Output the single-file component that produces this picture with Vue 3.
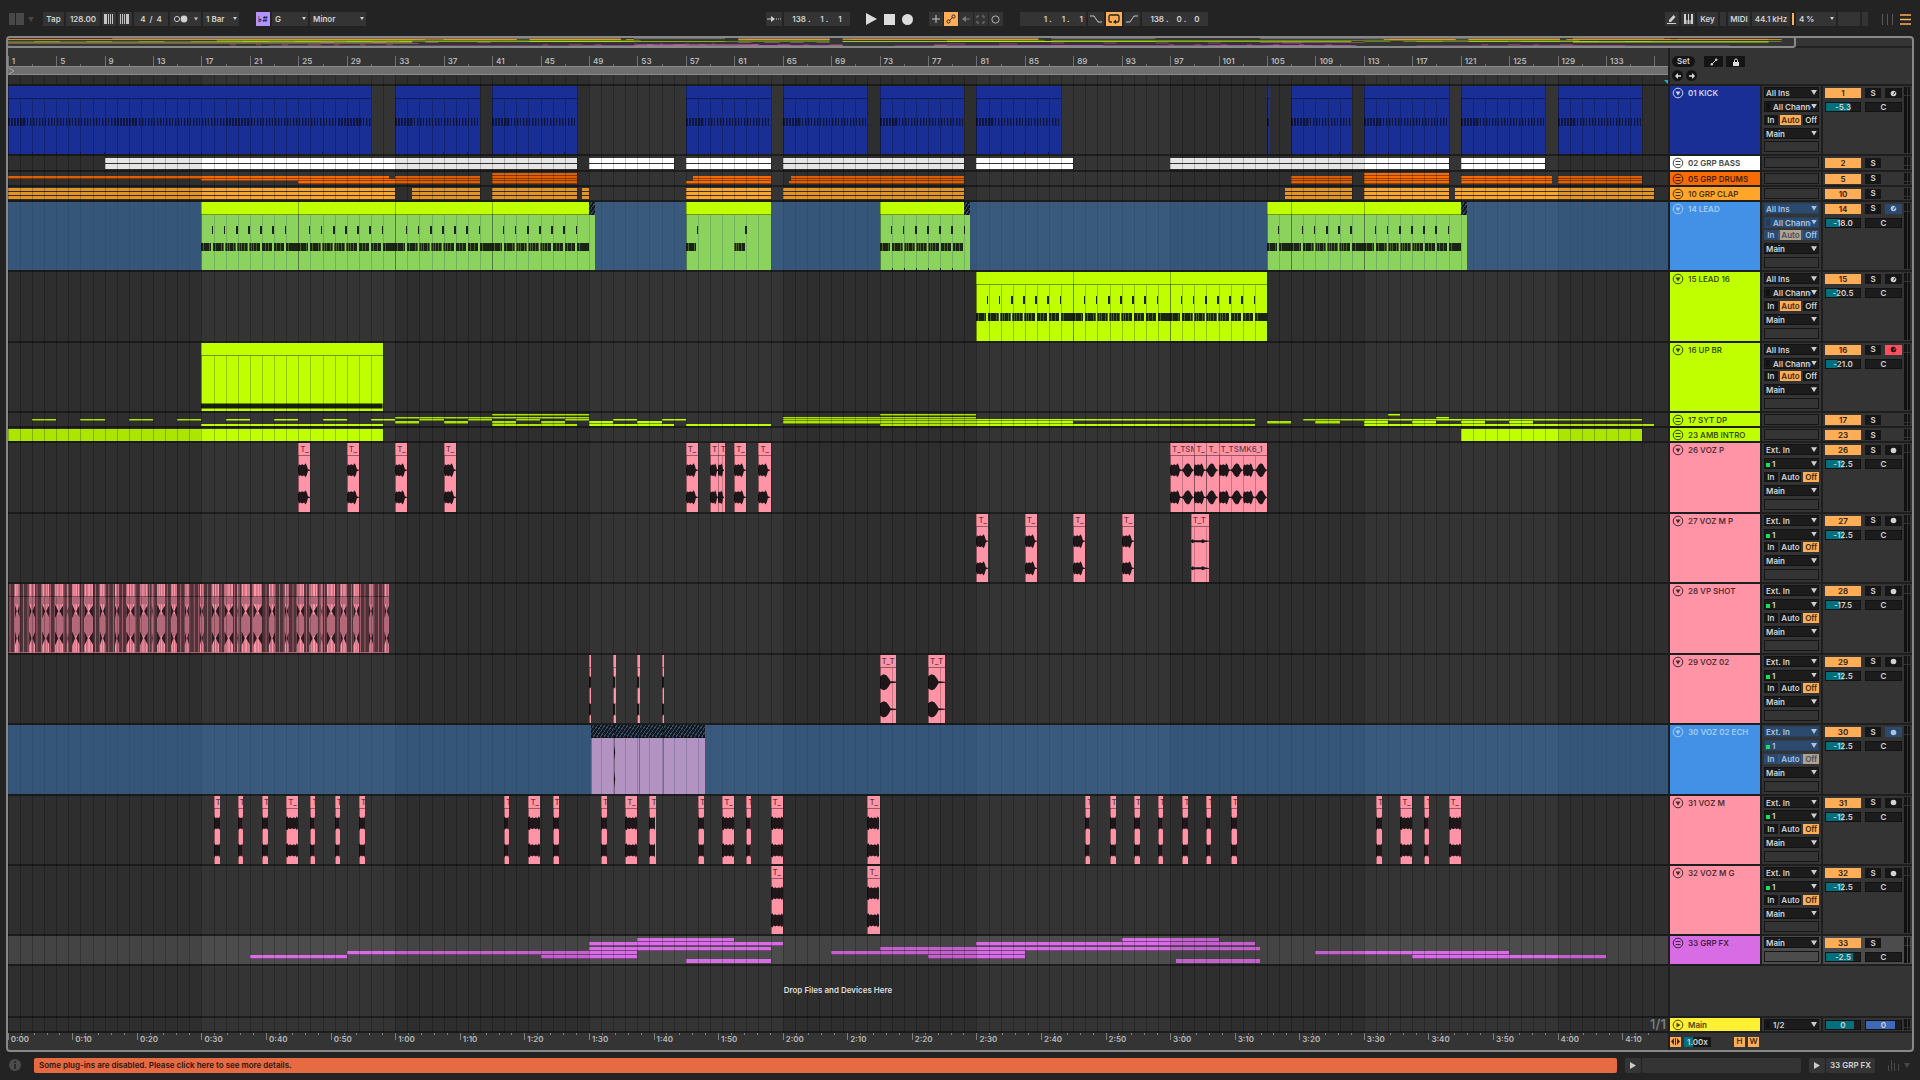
<template>
  <div class="app">
    <header class="toolbar">
      <div class="group">
        <button class="plain" aria-label="Toggle browser">
          <svg width="25" height="12" viewBox="0 0 25 12"><path d="M0 0h6v12H0zM7 0h8v12H7z" fill="#484848" /><path d="M19 4h6l-3 5z" fill="#484848" /></svg>
        </button>
        <div class="cluster gap-tap">
          <button class="tb w21">Tap</button>
          <input class="tb w34" value="128.00" aria-label="Tempo" />
          <button class="tb w14" aria-label="Nudge down">
            <svg width="10" height="10" viewBox="0 0 10 10"><path d="M0 0h3v10H0zM4 0h1v10H4zM6 0h1v10H6zM8 0h1v10H8z" fill="#c4c4c4" /></svg>
          </button>
          <button class="tb w14" aria-label="Nudge up">
            <svg width="10" height="10" viewBox="0 0 10 10"><path d="M0 0h1v10H0zM2 0h1v10H2zM4 0h1v10H4zM6 0h3v10H6z" fill="#c4c4c4" /></svg>
          </button>
          <input class="tb w34" value="4  /  4" aria-label="Time signature" />
          <button class="tb w31" aria-label="Metronome">
            <svg width="26" height="8" viewBox="0 0 26 8"><circle cx="4" cy="4" r="2.6" fill="none" stroke="#c4c4c4" /><circle cx="11" cy="4" r="3.4" fill="#d0d0d0" /><path d="M21 2.500h4l-2 3z" fill="#c4c4c4" /></svg>
          </button>
          <span class="pick tb-pick w36"><select aria-label="Quantization"><option>1 Bar</option></select></span>
        </div>
        <div class="cluster gap-key">
          <button class="tb w14 violet" aria-label="Scale mode">♭<sup>#</sup></button>
          <span class="pick tb-pick w36"><select aria-label="Root note"><option>G</option></select></span>
          <span class="pick tb-pick w56"><select aria-label="Scale"><option>Minor</option></select></span>
        </div>
      </div>
      <i class="push-a"></i>
      <div class="group">
        <div class="cluster">
          <button class="tb w16" aria-label="Follow">
            <svg width="14" height="8" viewBox="0 0 14 8"><path d="M0 4h4M9 4h1M11 4h1M13 4h1" stroke="#c4c4c4" /><path d="M4 1l4 3-4 3z" fill="#d0d0d0" /></svg>
          </button>
          <input class="tb w66" value="138 .     1 .     1" aria-label="Arrangement position" />
        </div>
        <div class="transport">
          <button class="plain" aria-label="Play"><svg width="11" height="12" viewBox="0 0 11 12"><path d="M0 0l11 6-11 6z" fill="#dcdcdc" /></svg></button>
          <button class="plain" aria-label="Stop"><svg width="11" height="11" viewBox="0 0 11 11"><path d="M0 0h11v11H0z" fill="#dcdcdc" /></svg></button>
          <button class="plain" aria-label="Record"><svg width="11" height="11" viewBox="0 0 11 11"><circle cx="5.500" cy="5.500" r="5.500" fill="#dcdcdc" /></svg></button>
        </div>
        <div class="cluster tight">
          <button class="tb w14" aria-label="Overdub"><svg width="8" height="8" viewBox="0 0 8 8"><path d="M4 0v8M0 4h8" stroke="#c4c4c4" /></svg></button>
          <button class="tb w14 on" aria-label="Automation arm">
            <svg width="10" height="10" viewBox="0 0 10 10"><circle cx="2.500" cy="7.500" r="1.600" fill="none" stroke="#2a2a2a" /><circle cx="7.500" cy="2.500" r="1.600" fill="none" stroke="#2a2a2a" /><path d="M3.500 6.500l3-3" stroke="#2a2a2a" /></svg>
          </button>
          <button class="tb w14" aria-label="Re-enable automation"><svg width="8" height="8" viewBox="0 0 8 8"><path d="M8 4H3" stroke="#7c7c7c" /><path d="M4 1v6L0 4z" fill="#7c7c7c" /></svg></button>
          <button class="tb w14" aria-label="Capture MIDI"><svg width="9" height="9" viewBox="0 0 9 9"><path d="M1 3V1h2M6 1h2v2M8 6v2H6M3 8H1V6" fill="none" stroke="#7c7c7c" /></svg></button>
          <button class="tb w14" aria-label="Session record"><svg width="9" height="9" viewBox="0 0 9 9"><circle cx="4.500" cy="4.500" r="3.600" fill="none" stroke="#b0b0b0" /></svg></button>
        </div>
        <div class="cluster gap-loop">
          <input class="tb w66 right" value="1 .     1 .     1" aria-label="Loop start" />
          <button class="tb w16" aria-label="Punch in"><svg width="12" height="8" viewBox="0 0 12 8"><path d="M0 1h4l4 6h4" fill="none" stroke="#c4c4c4" /></svg></button>
          <button class="tb w16 on" aria-label="Loop">
            <svg width="12" height="10" viewBox="0 0 12 10"><path d="M4 8H2.500Q1 8 1 6.500v-4Q1 1 2.500 1h7Q11 1 11 2.500v4Q11 8 9.500 8H8" fill="none" stroke="#222" stroke-width="1.300" /><path d="M8 5.500v4.500L5 8z" fill="#222" /></svg>
          </button>
          <button class="tb w16" aria-label="Punch out"><svg width="12" height="8" viewBox="0 0 12 8"><path d="M0 7h4l4-6h4" fill="none" stroke="#c4c4c4" /></svg></button>
          <input class="tb w66" value="138 .    0 .    0" aria-label="Loop length" />
        </div>
      </div>
      <i class="push-b"></i>
      <div class="group">
        <div class="cluster">
          <button class="tb w14" aria-label="Draw mode"><svg width="10" height="10" viewBox="0 0 10 10"><path d="M2 6l4.500-5 2 2L4 8H2z" fill="#d0d0d0" /><path d="M0 9.500h9" stroke="#d0d0d0" /></svg></button>
          <button class="tb w14" aria-label="Computer keyboard"><svg width="9" height="10" viewBox="0 0 9 10"><path d="M0 0h9v10H0z" fill="#d0d0d0" /><path d="M3 6v4M6 6v4" stroke="#343434" /><path d="M2 0h2v6H2zM5 0h2v6H5z" fill="#343434" /></svg></button>
          <button class="tb w21">Key</button>
          <span class="tb w6"></span>
          <button class="tb w22">MIDI</button>
          <button class="tb w38">44.1 kHz</button>
          <span class="cpu"></span>
          <span class="pick tb-pick w40"><select aria-label="CPU load"><option>4 %</option></select></span>
          <span class="tb w22"></span>
          <span class="tb w6"></span>
        </div>
        <div class="views">
          <button class="plain" aria-label="Session view"><svg width="11" height="11" viewBox="0 0 11 11"><path d="M.5 0v11M5.500 0v11M10.500 0v11" stroke="#585858" /></svg></button>
          <button class="plain" aria-label="Arrangement view"><svg width="11" height="11" viewBox="0 0 11 11"><path d="M0 1h11M0 5.500h11M0 10h11" stroke="#ffad56" stroke-width="1.600" /></svg></button>
        </div>
      </div>
    </header>

    <main class="window">
      <div class="overview">
        <svg :viewBox="`0 0 146 ${tracks.length}`" preserveAspectRatio="none">
          <rect v-for="(m, i) in minimap" :key="i" :x="m.x" :y="m.y" :width="m.w" height="1.3" :fill="m.fill" opacity="0.6" />
        </svg>
        <i class="visible-range"></i>
      </div>

      <div class="columns">
        <section class="timeline">
          <div class="ruler">
            <i v-for="b in halfTicks" :key="'t' + b" class="tick" :style="{ left: pos(b) }"></i>
            <span v-for="b in barLabels" :key="b" class="bar-label" :style="{ left: pos(b) }">{{ b <= 133 ? b : '' }}</span>
          </div>
          <div class="scrub">
            <svg width="8" height="8" viewBox="0 0 8 8"><path d="M1 1l5 3-5 3" fill="none" stroke="#a8a8a8" /></svg>
          </div>
          <div class="canvas">
            <i v-for="b in shades" :key="'s' + b" class="shade" :style="{ left: pos(b), width: len(Math.min(16, 138.1 - b)) }"></i>
            <i v-for="b in 137" :key="'g' + b" class="line" :style="{ left: pos(b) }"></i>
            <div class="lane locators"><i class="end-marker"></i></div>
            <div v-for="t in tracks" :key="t.num" :class="['lane', t.size, { picked: t.picked, focus: t.focus }]">
              <template v-for="(s, si) in t.stripes || []" :key="si">
                <i
                  v-for="(seg, i) in s.segs"
                  :key="i"
                  :class="['stripe', { joined: s.joined }]"
                  :style="{ left: pos(seg[0]), width: len(seg[1] - seg[0]), top: s.top + '%', height: s.h + '%', background: t.color }"
                ></i>
              </template>
              <div
                v-for="(c, ci) in t.clips || []"
                :key="ci"
                class="clip"
                :style="{ left: pos(c.a), width: len(c.b - c.a) }"
              >
                <i class="clip-body" :style="{ background: t.clipColor || t.color }"></i>
                <svg v-if="c.art" :viewBox="`0 0 ${c.art.w} 68`" preserveAspectRatio="none" :shape-rendering="c.art.crisp ? 'crispEdges' : 'auto'">
                  <path v-if="c.art.base" :d="c.art.base" fill="#4e3339" />
                  <path v-if="c.art.pink" :d="c.art.pink" :fill="PINK" />
                  <path v-if="c.art.soft" :d="c.art.soft" :fill="c.art.softFill" />
                  <path :d="c.art.d" :fill="c.art.fill" />
                </svg>
                <div
                  :class="['clip-head', { hatch: c.hatch }]"
                  :style="{ width: headWidth(c), background: c.hatch || c.bare ? null : t.clipColor || t.color }"
                >{{ c.name }}</div>
                <i v-if="c.tail" class="clip-tail hatch" :style="{ left: headWidth(c) }"></i>
              </div>
            </div>
            <div class="lane drop"><span>Drop Files and Devices Here</span></div>
            <div class="lane low main-lane"><span>1/1</span></div>
          </div>
          <div class="time-ruler">
            <i v-for="s in 128" :key="s" class="dot" :style="{ left: sec((s - 1) * 2) }"></i>
            <span v-for="s in 26" :key="'l' + s" class="time-label" :style="{ left: sec((s - 1) * 10) }">{{ clock((s - 1) * 10) }}</span>
          </div>
        </section>

        <aside class="side">
          <div class="side-top">
            <div class="side-line">
              <button class="pill">Set</button>
              <button class="mini w19" aria-label="Lock envelopes"><svg width="8" height="8" viewBox="0 0 8 8"><path d="M2 6l4-4" stroke="#ccc" /><circle cx="1.800" cy="6.200" r="1.200" fill="#ccc" /><circle cx="6.200" cy="1.800" r="1.200" fill="#ccc" /></svg></button>
              <button class="mini w19" aria-label="Automation mode"><svg width="8" height="8" viewBox="0 0 8 8"><path d="M1 4h6v4H1z" fill="#ddd" /><path d="M2.500 4V2.500a1.500 1.500 0 0 1 3 0V4" fill="none" stroke="#ddd" /></svg></button>
            </div>
            <div class="side-line arrows">
              <button class="round" aria-label="Previous locator"><svg width="6" height="6" viewBox="0 0 6 6"><path d="M6 3H2" stroke="#ddd" stroke-width="1.400" /><path d="M3 0v6L0 3z" fill="#ddd" /></svg></button>
              <button class="round" aria-label="Next locator"><svg width="6" height="6" viewBox="0 0 6 6"><path d="M0 3h4" stroke="#ddd" stroke-width="1.400" /><path d="M3 0v6l3-3z" fill="#ddd" /></svg></button>
            </div>
          </div>

          <div v-for="t in tracks" :key="t.num" :class="['strip', t.size, { picked: t.picked, focus: t.focus }]">
            <div class="head" :style="{ background: t.color, color: t.ink }">
              <button class="fold" :aria-label="`Fold ${t.name}`">
                <svg width="12" height="12" viewBox="0 0 12 12"><circle cx="6" cy="6" r="4.800" fill="none" stroke="currentColor" /><path v-if="t.stripes" d="M3.500 4.500h5M3.500 7.500h5" stroke="currentColor" /><path v-else d="M3.500 4.500h5L6 8.500z" fill="currentColor" /></svg>
              </button>
              <span>{{ t.name }}</span>
            </div>
            <div class="io">
              <template v-if="t.input">
                <span class="pick tint"><select :aria-label="`${t.name} input`"><option>{{ t.input }}</option></select></span>
                <span :class="['pick', 'tint', t.input === 'Ext. In' ? 'lit' : 'unlit']"><select :aria-label="`${t.name} channel`"><option>{{ t.channel }}</option></select></span>
                <div class="monitor tint">
                  <button v-for="m in ['In', 'Auto', 'Off']" :key="m" :class="[m.toLowerCase(), { on: m === t.monitor }]">{{ m }}</button>
                </div>
              </template>
              <span v-if="t.volume" class="pick"><select :aria-label="`${t.name} output`"><option>Main</option></select></span>
              <div class="blank"></div>
            </div>
            <div class="mix">
              <button class="num">{{ t.num }}</button>
              <button class="key solo">S</button>
              <button v-if="t.input" :class="['key', 'arm', 'tint', { armed: t.armed }]" :aria-label="`Arm ${t.name}`">
                <svg width="7" height="7" viewBox="0 0 7 7"><circle cx="3.500" cy="3.500" r="2.800" fill="currentColor" /><path v-if="t.channel !== '1'" d="M3.500 4.500l2-3" :stroke="t.armed ? '#ff4f5f' : '#161616'" /></svg>
              </button>
              <template v-if="t.volume">
                <input class="vol" :value="t.volume" :aria-label="`${t.name} volume`" :style="{ '--fill': t.fill + '%' }" />
                <input class="pan" value="C" :aria-label="`${t.name} pan`" />
              </template>
            </div>
            <div class="meter"><i></i><i></i></div>
          </div>

          <div class="strip drop"></div>
          <div class="strip low">
            <div class="head main-head">
              <button class="fold" aria-label="Main track">
                <svg width="12" height="12" viewBox="0 0 12 12"><circle cx="6" cy="6" r="4.800" fill="none" stroke="currentColor" /><path d="M4.500 3.500v5L8.500 6z" fill="currentColor" /></svg>
              </button>
              <span>Main</span>
            </div>
            <div class="io"><span class="pick unlit"><select aria-label="Main output"><option>1/2</option></select></span></div>
            <div class="mix">
              <input class="vol" value="0" aria-label="Main volume" :style="{ '--fill': '82%' }" />
              <input class="pan cue" value="0" aria-label="Cue volume" />
            </div>
            <div class="meter"><i></i><i></i></div>
          </div>
          <div class="side-bottom">
            <button class="orange" aria-label="Optimize width"><svg width="9" height="7" viewBox="0 0 9 7"><path d="M3 0v7L0 3.500zM6 0v7l3-3.500zM4 0h1v7H4z" fill="#3a2a16" /></svg></button>
            <input class="zoom-value" value="1.00x" aria-label="Zoom" />
            <button class="orange push">H</button>
            <button class="orange">W</button>
          </div>
        </aside>
      </div>
    </main>

    <footer class="status">
      <svg width="12" height="12" viewBox="0 0 12 12"><circle cx="6" cy="6" r="6" fill="#4c4c4c" /><path d="M6 2v2M6 5v5" stroke="#232323" stroke-width="1.600" /></svg>
      <a class="warning" href="#">Some plug-ins are disabled. Please click here to see more details.</a>
      <div class="cluster tight">
        <button class="foot-btn w16" aria-label="Show clip view"><svg width="6" height="7" viewBox="0 0 6 7"><path d="M0 0l6 3.500L0 7z" fill="#ccc" /></svg></button>
        <span class="foot-btn wide"></span>
      </div>
      <div class="cluster tight">
        <button class="foot-btn w16" aria-label="Show device view"><svg width="6" height="7" viewBox="0 0 6 7"><path d="M0 0l6 3.500L0 7z" fill="#ccc" /></svg></button>
        <button class="foot-btn name">33 GRP FX</button>
      </div>
      <button class="plain" aria-label="Mixer"><svg width="22" height="11" viewBox="0 0 22 11"><path d="M.5 5v6M3.500 0v11M6.500 3v8M10.500 4v7" stroke="#484848" /><path d="M16 3h6l-3 5z" fill="#484848" /></svg></button>
    </footer>
  </div>
</template>

<script setup>
const SPAN = 137.1
const ORIGIN = 1.02
const SECONDS_PER_BAR = 1.875

const pos = (bar) => ((bar - ORIGIN) / SPAN) * 100 + '%'
const len = (bars) => (bars / SPAN) * 100 + '%'
const sec = (s) => pos(1 + s / SECONDS_PER_BAR)
const clock = (s) => `${Math.floor(s / 60)}:${String(s % 60).padStart(2, '0')}`

const barLabels = Array.from({ length: 35 }, (_, i) => 1 + i * 4)
const halfTicks = Array.from({ length: 34 }, (_, i) => 3 + i * 4)
const shades = [1, 33, 65, 97, 129]

function headWidth(c) {
  return c.tail ? ((c.b - c.a - c.tail) / (c.b - c.a)) * 100 + '%' : '100%'
}

// ---- MIDI previews, x in 1/100 bar ----
const box = (x, y, w, h) => `M${x} ${y}h${w}v${h}h${-w}z`

const notches = (bars, step) => {
  let d = ''
  for (let i = step; i < bars; i += step) d += box(i * 100 - 3, 0, 8, 3) + box(i * 100 - 3, 66, 8, 2)
  return d
}

function kickArt(bars) {
  let d = notches(bars, 2)
  let soft = ''
  for (let i = 0; i < bars * 4; i++) {
    d += box(i * 25 + 3, 32, 10, 8)
    if (i % 3) soft += box(i * 25 + 13, 32, 7, 8)
  }
  return { w: bars * 100, d, soft, fill: '#0f1740', softFill: '#16246a', crisp: true }
}

function leadArt(bars, only, total = bars) {
  let d = ''
  let soft = ''
  for (let i = 0; i < bars; i++) {
    if (only && !only.includes(i)) continue
    const x = i * 100
    const last = !only && i === bars - 1
    soft += box(x, 41, last ? 100 : 86, 8)
    for (const [o, w] of [[3, 14], [24, 8], [36, 18], [60, 8], [72, 12]]) d += box(x + o, 41, w, 8)
    if (last) d += box(x + 45, 41, 55, 8)
    else d += box(x + 90, 24, 12, 8)
  }
  return { w: total * 100, d, soft, fill: '#1a2412', softFill: '#48622a', crisp: true }
}

// ---- waveforms, mirrored around both channel centres ----
const shapes = {
  hit: [[0, 3], [8, 6], [20, 5], [35, 6], [50, 5], [62, 7], [72, 5], [82, 1], [100, 0.4]],
  round: [[0, 0.6], [12, 2], [25, 5], [45, 7], [62, 6], [80, 2], [90, 0.6], [100, 0.4]],
  full: [[0, 6], [12, 7], [22, 5], [35, 6], [50, 5], [65, 6], [80, 5], [90, 7], [100, 5]],
  tail: [[0, 6], [20, 8], [38, 7], [52, 4], [62, 1], [100, 0.5]],
  flat: [[0, 0.6], [8, 2], [18, 1], [55, 1], [65, 2], [75, 1], [100, 0.4]]
}

function waveArt(names) {
  let d = ''
  names.forEach((n, i) => {
    for (const cy of [27, 54]) {
      const up = shapes[n].map(([x, h]) => `${x + i * 100} ${cy - h}`)
      const down = shapes[n].map(([x, h]) => `${x + i * 100} ${cy + h}`).reverse()
      d += `M${up.concat(down).join('L')}z`
    }
  })
  return { w: names.length * 100, d, fill: '#1f1619' }
}

function shotArt() {
  const bursts = [
    [17, 11], [52, 14], [84, 17], [115, 20], [144, 4], [157, 18], [187, 21], [225, 14], [262, 10], [290, 20],
    [323, 19], [352, 3], [365, 20], [399, 15], [433, 10], [470, 9], [499, 18], [530, 21], [561, 3], [572, 20],
    [601, 21], [639, 15], [678, 9], [707, 18], [738, 20], [766, 4], [781, 20], [814, 15], [846, 14], [884, 10], [922, 11]
  ]
  const base = box(0, 0, 934, 68)
  let d = ''
  let pink = ''
  let soft = ''
  for (let x = 4; x < 934; x += 11) soft += box(x, 0, 2, 68)
  for (const [x, w] of bursts) {
    pink += box(x, 0, w, 68)
    soft += box(x, 13, w, 7) + box(x + w * 0.35, 0, 2, 68) + box(x + w * 0.7, 0, 2, 68) + box(x, 30, w, 22)
    for (const cy of [27, 54]) {
      d += `M${x} ${cy - 7}l${w * 0.4} 7l${-w * 0.4} 7zM${x + w} ${cy - 6}l${-w * 0.45} 6l${w * 0.45} 6z`
    }
  }
  return { w: 934, base, d, pink, soft, fill: '#2a1a1e', softFill: '#b3687a' }
}

const kick = (a, b) => ({ a, b, art: kickArt(b - a) })
const lead = (a, b, tail = 0) => ({ a, b: b + tail, tail, art: leadArt(b - a, null, b - a + tail) })
const voz = (a, b, shape, name = 'T_') => ({ a, b, name, art: waveArt([].concat(shape)) })
const echo = (a, b) => ({ a, b, hatch: true })

const rows = (top, h, segs, joined = false) => ({ top, h, segs, joined })
const both = (segs) => [rows(8, 41, segs), rows(55, 41, segs)]

const bassSegs = [[9, 48], [49, 56], [57, 64], [65, 80], [81, 89], [97, 120], [121, 128]]
const clapSegs = [[1, 33], [34.4, 40], [41, 48], [48.4, 49], [57, 64], [65, 80], [106.5, 112], [113, 120], [120.5, 137]]
const drumSegs = [[33, 40], [41, 48], [107, 112], [113, 120], [121, 128.5], [129, 136]]
const vozM = [
  [18, 18.5], [20, 20.4], [22, 22.5], [24, 25], [26, 26.4], [28, 28.4], [30, 30.5], [42, 42.4], [44, 45], [46, 46.5],
  [50, 50.5], [52, 53], [54, 54.5], [58, 58.5], [60, 61], [62, 62.4], [64, 65], [72, 73], [90, 90.4], [92, 92.5],
  [94, 94.5], [96, 96.4], [98, 98.5], [100, 100.4], [102, 102.5], [114, 114.5], [116, 117], [118, 118.4], [120, 121]
]

const LIME = '#bfff00'
const PINK = '#ff94a6'
const INK = 'rgba(0, 0, 0, 0.72)'
const midi = { size: 'tall', input: 'All Ins', channel: 'All Channels', monitor: 'Auto', ink: INK }
const audio = { size: 'tall', input: 'Ext. In', channel: '1', monitor: 'Off', color: PINK, ink: INK, volume: '-12.5', fill: 54 }

const splitLead = leadArt(7, [0, 1, 2, 3, 4, 5, 6], 7.5)
splitLead.d += notches(7, 1)

const tracks = [
  {
    ...midi, num: 1, name: '01 KICK', color: '#1a2f96', ink: '#d0d4ea', volume: '-5.3', fill: 72,
    clips: [
      kick(1, 31), kick(33, 40), kick(41, 48), kick(57, 64), kick(65, 72), kick(73, 80), kick(81, 88),
      kick(105, 105.25), kick(107, 112), kick(113, 120), kick(121, 128), kick(129, 136)
    ]
  },
  { num: 2, size: 'low', name: '02 GRP BASS', color: '#ffffff', ink: '#444', stripes: both(bassSegs) },
  {
    num: 5, size: 'low', name: '05 GRP DRUMS', color: '#f66c03', ink: INK,
    stripes: [
      rows(14, 20, [[41, 48], [113, 120]], true),
      rows(34, 20, [[1, 32.5], [57.6, 64], [65.7, 80], ...drumSegs], true),
      rows(54, 20, [[17, 33], [57.6, 64], [65.7, 80], ...drumSegs], true),
      rows(74, 20, [[25, 33], [57, 64], [65.5, 80], ...drumSegs], true)
    ]
  },
  {
    num: 10, size: 'low', name: '10 GRP CLAP', color: '#ffa529', ink: INK,
    stripes: [rows(12, 22, clapSegs), rows(41, 22, clapSegs), rows(70, 24, clapSegs)]
  },
  {
    ...midi, num: 14, name: '14 LEAD', color: '#4291e6', clipColor: LIME, ink: '#a9cdf2', picked: true, volume: '-18.0', fill: 40,
    clips: [
      lead(17, 25), lead(25, 33), lead(33, 41), lead(41, 49, 0.5), { a: 57, b: 64, art: leadArt(7, [0, 4]) },
      { a: 73, b: 80.5, tail: 0.5, art: splitLead },
      lead(105, 107), lead(107, 113), lead(113, 121, 0.5)
    ]
  },
  { ...midi, num: 15, name: '15 LEAD 16', color: LIME, volume: '-20.5', fill: 34, clips: [lead(81, 89), lead(89, 97), lead(97, 105)] },
  {
    ...midi, num: 16, name: '16 UP BR', color: LIME, volume: '-21.0', fill: 33, armed: true,
    clips: [{ a: 17, b: 32, art: { w: 1500, d: box(0, 60, 1500, 5), fill: '#16200a' } }]
  },
  {
    num: 17, size: 'low', name: '17 SYT DP', color: LIME, ink: INK,
    stripes: [
      rows(8, 18, [[41, 49], [73, 81], [115, 116]], true),
      rows(27, 18, [[33, 49], [65, 81], [119, 120]], true),
      rows(46, 18, [
        [3, 5], [7, 9], [11, 13], [15, 17], [19, 21], [23, 25], [27, 29], [31, 33], [35, 37], [39, 41],
        [43, 45], [47, 49], [51, 53], [55, 57], [65, 104], [108, 136]
      ], true),
      rows(64, 18, [
        [33, 35], [37, 39], [41, 43], [45, 47], [49, 51], [53, 55], [65, 89], [105, 107], [109, 111],
        [113, 115], [117, 119], [121, 123], [125, 127]
      ], true),
      rows(82, 14, [[17, 32], [41, 48], [49, 56], [57, 64], [73, 104], [113, 137]])
    ]
  },
  { num: 23, size: 'low', name: '23 AMB INTRO', color: LIME, ink: INK, stripes: both([[1, 32], [121, 136]]) },
  {
    ...audio, num: 26, name: '26 VOZ P',
    clips: [
      voz(25, 26, 'hit'), voz(29, 30, 'hit'), voz(33, 34, 'hit'), voz(37, 38, 'hit'), voz(57, 58, 'hit'),
      voz(59, 59.7, 'hit', 'T'), voz(59.7, 60.2, 'hit', 'T'), voz(61, 62, 'hit'), voz(63, 64, 'hit'),
      voz(97, 99, ['hit', 'round'], 'T_TSM'), voz(99, 100, 'hit'), voz(100, 101, 'round'),
      voz(101, 105, ['hit', 'round', 'hit', 'round'], 'T_TSMK6_1')
    ]
  },
  {
    ...audio, num: 27, name: '27 VOZ M P',
    clips: [voz(81, 82, 'hit'), voz(85, 86, 'hit'), voz(89, 90, 'hit'), voz(93, 94, 'hit'), voz(98.7, 100.2, 'flat', 'T_T')]
  },
  { ...audio, num: 28, name: '28 VP SHOT', volume: '-17.5', fill: 40, clips: [{ a: 1, b: 32.5, bare: true, art: shotArt() }] },
  {
    ...audio, num: 29, name: '29 VOZ 02',
    clips: [
      ...[49, 51, 53, 55].map((b) => voz(b, b + 0.2, 'full', '')),
      voz(73, 74.4, 'tail', 'T_T'), voz(77, 78.4, 'tail', 'T_T')
    ]
  },
  {
    ...audio, num: 30, name: '30 VOZ 02 ECH', color: '#4291e6', clipColor: PINK, ink: '#a9cdf2', picked: true,
    clips: [
      echo(49.2, 51.1),
      { ...echo(51.1, 53.1), art: { w: 200, d: 'M0 20l10 7-10 8zM0 46l10 8-10 8z', fill: '#1f1619' } },
      echo(53.1, 55.1),
      echo(55.1, 58.6)
    ]
  },
  { ...audio, num: 31, name: '31 VOZ M', clips: vozM.map(([a, b]) => voz(a, b, 'full', b - a < 1 ? 'T' : 'T_')) },
  { ...audio, num: 32, name: '32 VOZ M G', clips: [voz(64, 65, 'full'), voz(72, 73, 'full')] },
  {
    num: 33, size: 'mid', name: '33 GRP FX', color: '#d86ce4', ink: INK, focus: true, volume: '-2.5', fill: 79,
    stripes: [
      rows(6, 15, [[53, 61], [93, 101]], true),
      rows(22, 15, [[49, 65], [81, 104]], true),
      rows(38, 15, [[49, 64], [73, 104.4]], true),
      rows(53, 15, [[29, 53], [69, 85], [109, 125]], true),
      rows(69, 15, [[21, 29], [45, 53], [77, 85], [117, 133]], true),
      rows(84, 13, [[57, 64], [97.5, 104.4]])
    ]
  }
]

const minimap = tracks.flatMap((t, i) => {
  const segs = t.stripes ? t.stripes.flatMap((s) => s.segs) : t.clips.map((c) => [c.a, c.b])
  const fill = t.num === 2 ? '#9a9a9a' : t.clipColor || t.color
  return segs.map(([a, b]) => ({ x: a - 1, y: i, w: b - a, fill }))
})
</script>

<style>
body {
  margin: 0;
  background: #232323;
}
</style>

<style scoped>
* {
  box-sizing: border-box;
}

.app {
  display: flex;
  flex-direction: column;
  height: 100vh;
  overflow: hidden;
  background: #232323;
  color: #d2d2d2;
  font: 600 8px/11px Inter, Roboto, "Liberation Sans", sans-serif;
}

button,
input,
select {
  margin: 0;
  padding: 0;
  border: 0;
  border-radius: 0;
  font: inherit;
  color: inherit;
  background: none;
  min-width: 0;
}

input {
  text-align: center;
}

select {
  appearance: none;
  width: 100%;
  height: 100%;
}

svg {
  display: block;
}

.plain {
  display: flex;
}

/* toolbar */
.toolbar {
  display: flex;
  align-items: center;
  flex: none;
  height: 36px;
  padding: 2px 9px 0;
}

.group,
.cluster,
.transport,
.views {
  display: flex;
  align-items: center;
}

.cluster { gap: 2px; }
.cluster.tight { gap: 1px; }
.transport { gap: 7px; padding: 0 16px; }
.views { gap: 7px; margin-left: 14px; }
.push-a { flex: 7; }
.push-b { flex: 8; }
.gap-tap { margin-left: 9px; }
.gap-key { margin-left: 17px; }
.gap-loop { margin-left: 17px; }

.tb {
  display: flex;
  align-items: center;
  justify-content: center;
  height: 14px;
  background: #343434;
  white-space: pre;
}

.w6 { width: 6px; }
.w14 { width: 14px; }
.w16 { width: 16px; }
.w19 { width: 19px; }
.w21 { width: 21px; }
.w22 { width: 22px; }
.w31 { width: 31px; }
.w34 { width: 34px; }
.w36 { width: 36px; }
.w38 { width: 38px; }
.w40 { width: 40px; }
.w56 { width: 56px; }
.w66 { width: 66px; }
.right { padding-right: 3px; text-align: right; }
.on { background: #ffad56; color: #3a2a16; }

.violet {
  background: #b493ff;
  color: #201a30;
}

.violet sup {
  font-size: 8px;
  line-height: 8px;
}

.cpu {
  width: 2px;
  height: 12px;
  background: #ffad56;
}

.pick {
  position: relative;
  display: block;
  height: 11px;
  background: #1c1c1c;
  border: 1px solid #121212;
}

.pick select {
  padding: 0 7px 0 1px;
  line-height: 9px;
}

.pick::after {
  content: "";
  position: absolute;
  top: 2px;
  right: 1px;
  width: 6px;
  height: 5px;
  background: #cfcfcf;
  clip-path: polygon(0 0, 100% 0, 50% 100%);
  pointer-events: none;
}

.pick.tb-pick {
  height: 14px;
  background: #343434;
  border: 0;
}

.tb-pick select {
  padding-left: 3px;
}

.tb-pick::after {
  top: 5px;
  right: 2px;
  width: 4px;
  height: 3px;
}

.lit select { padding-left: 7px; }
.unlit select { padding-left: 8px; }

.lit::before,
.unlit::before {
  content: "";
  position: absolute;
  left: 1px;
  bottom: 1px;
  width: 4px;
  height: 4px;
  background: #14e05a;
  pointer-events: none;
}

.unlit::before {
  height: 7px;
  background: #121212;
}

/* window */
.window {
  display: flex;
  flex-direction: column;
  flex: 1;
  min-height: 0;
  margin: 0 6px;
  border: 2px solid #888;
  border-radius: 4px;
  background: #343434;
  overflow: hidden;
}

.overview {
  position: relative;
  flex: none;
  height: 10px;
  border-bottom: 2px solid #222;
}

.overview svg {
  width: 100%;
  height: 8px;
}

.visible-range {
  position: absolute;
  inset: -2px auto -2px -2px;
  width: 94%;
  border: 2px solid #888;
  border-radius: 3px;
}

.columns {
  display: flex;
  flex: 1;
  min-height: 0;
}

.timeline {
  display: flex;
  flex-direction: column;
  flex: 1;
  min-width: 0;
}

.ruler {
  position: relative;
  flex: none;
  height: 18px;
  overflow: hidden;
  color: #b8b8b8;
}

.bar-label {
  position: absolute;
  bottom: 0;
  height: 10px;
  padding-left: 3px;
  border-left: 1px solid #707070;
  line-height: 10px;
}

.tick {
  position: absolute;
  bottom: 0;
  width: 1px;
  height: 2px;
  background: #707070;
}

.scrub {
  flex: none;
  height: 9px;
  background: #6f6f6f;
  border-top: 1px solid #8a8a8a;
  border-bottom: 1px solid #8a8a8a;
}

.canvas {
  position: relative;
  display: flex;
  flex-direction: column;
  flex: 1;
  min-height: 0;
  overflow: hidden;
  isolation: isolate;
}

.shade {
  position: absolute;
  top: 0;
  bottom: 0;
  z-index: 1;
  background: rgba(0, 0, 0, 0.1);
  pointer-events: none;
}

.line {
  position: absolute;
  top: 0;
  bottom: 0;
  z-index: 3;
  width: 1px;
  background: rgba(0, 0, 0, 0.22);
  pointer-events: none;
}

.lane {
  position: relative;
  min-height: 0;
  border-bottom: 2px solid #1e1e1e;
  overflow: hidden;
}

.tall { flex: 68 1 0; }
.low { flex: 13 1 0; }
.mid { flex: 27 1 0; }
.drop { flex: 50 1 0; }

.locators {
  flex: none;
  height: 11px;
}

.end-marker {
  position: absolute;
  right: 0;
  bottom: 0;
  z-index: 4;
  width: 4px;
  height: 4px;
  background: #19b8c8;
  clip-path: polygon(0 0, 100% 0, 100% 100%);
}

.lane.picked::after {
  content: "";
  position: absolute;
  inset: 0;
  z-index: 4;
  background: rgba(66, 145, 235, 0.4);
}

.focus {
  background: #4c4c4c;
}

.stripe {
  position: absolute;
  z-index: 0;
}

.stripe.joined {
  border-bottom: 1px solid rgba(0, 0, 0, 0.4);
}

.clip {
  position: absolute;
  top: 0;
  bottom: 0;
  overflow: hidden;
}

.clip::before {
  content: "";
  position: absolute;
  inset: 0 auto 0 0;
  z-index: 6;
  width: 1px;
  background: rgba(0, 0, 0, 0.3);
}

.clip-body {
  position: absolute;
  inset: 0;
  z-index: 2;
}

.clip svg {
  position: absolute;
  inset: 0;
  z-index: 2;
  width: 100%;
  height: 100%;
}

.picked .clip svg {
  z-index: 5;
}

.clip-head {
  position: relative;
  z-index: 5;
  height: 13px;
  padding-left: 2px;
  border-bottom: 1px solid rgba(0, 0, 0, 0.4);
  color: rgba(0, 0, 0, 0.65);
  font-weight: 500;
  line-height: 12px;
  white-space: nowrap;
  overflow: hidden;
}

.clip-tail {
  position: absolute;
  top: 0;
  right: 0;
  z-index: 5;
  height: 13px;
}

.hatch {
  background: repeating-linear-gradient(125deg, #14181c 0 2px, #33506f 2px 3px);
}

.lane.drop {
  display: flex;
  align-items: center;
  justify-content: center;
  color: #dedede;
}

.lane.drop span {
  position: relative;
  z-index: 4;
}

.main-lane {
  display: flex;
  align-items: center;
  justify-content: flex-end;
  padding-right: 2px;
  color: #8c8c8c;
  font-size: 13px;
  line-height: 13px;
}

.time-ruler {
  position: relative;
  flex: none;
  height: 17px;
  overflow: hidden;
  color: #b8b8b8;
}

.time-label {
  position: absolute;
  top: 1px;
  height: 6px;
  padding-left: 2px;
  border-left: 1px solid #808080;
}

.dot {
  position: absolute;
  top: 0;
  width: 1px;
  height: 2px;
  background: #808080;
}

/* track controls */
.side {
  display: flex;
  flex-direction: column;
  flex: none;
  width: 244px;
  border-left: 2px solid #1e1e1e;
}

.side-top {
  flex: none;
  height: 38px;
  padding: 8px 0 0 2px;
  border-bottom: 2px solid #1e1e1e;
}

.side-line {
  display: flex;
  gap: 3px;
}

.arrows {
  margin-top: 3px;
}

.pill,
.mini,
.round {
  display: flex;
  align-items: center;
  justify-content: center;
  height: 11px;
  background: #141414;
}

.pill {
  width: 23px;
  margin-right: 6px;
  border-radius: 6px;
}

.round {
  width: 11px;
  border-radius: 50%;
}

.strip {
  display: flex;
  min-height: 0;
  border-bottom: 2px solid #1e1e1e;
  overflow: hidden;
}

.head {
  display: flex;
  align-items: flex-start;
  gap: 4px;
  flex: none;
  width: 92px;
  padding: 1px 0 0 2px;
  border-right: 2px solid #1e1e1e;
  line-height: 12px;
  white-space: nowrap;
}

.fold {
  flex: none;
  width: 12px;
  height: 12px;
}

.main-head {
  background: #fff034;
  color: #4c480c;
}

.io {
  display: flex;
  flex-direction: column;
  justify-content: space-between;
  flex: none;
  width: 61px;
  padding: 1px 2px 2px;
  border-right: 2px solid #1e1e1e;
}

.io .pick {
  flex: none;
}

.monitor {
  display: flex;
  gap: 2px;
  flex: none;
  height: 10px;
}

.monitor button {
  height: 10px;
  background: #161616;
  line-height: 10px;
}

.monitor .on {
  background: #ffad56;
  color: #3a2a16;
}

.in { width: 14px; }
.auto { width: 22px; }
.off { width: 16px; }

.blank {
  flex: none;
  height: 11px;
  border: 1px solid #161616;
}

.mix {
  display: grid;
  grid-template-columns: 36px 16px 17px;
  grid-auto-rows: 10px;
  gap: 4px;
  align-content: start;
  padding: 2px 0 0 2px;
  flex: 1;
}

.num {
  background: #ffad56;
  color: #2a2014;
  line-height: 10px;
}

.key {
  display: flex;
  align-items: center;
  justify-content: center;
  background: #161616;
}

.key.armed {
  background: #ff4f5f;
  color: #2a1014;
}

.vol,
.pan {
  height: 10px;
  border: 1px solid #121212;
  line-height: 8px;
}

.vol {
  grid-column: 1;
  width: 36px;
  background: linear-gradient(90deg, #00717c var(--fill), #1c1c1c var(--fill));
}

.pan {
  grid-column: 2 / 4;
  width: 37px;
  background: #1c1c1c;
}

.pan.cue {
  background: linear-gradient(90deg, #4068b8 82%, #1c1c1c 82%);
}

.meter {
  display: flex;
  gap: 1px;
  flex: none;
  width: 8px;
  padding: 1px 2px 1px 0;
}

.meter i {
  flex: 1;
  background: linear-gradient(#141414 0 8px, #343434 8px 9px, #101010 9px);
}

.picked .tint.pick,
.picked .tint.key,
.picked .tint button {
  background: #2b4a6e;
  border-color: #274060;
  color: #a9c3e0;
}

.picked .tint.monitor {
  background: #37567a;
}

.picked .tint .on {
  background: #b3a28c;
  color: #3e5068;
}

.picked .tint.pick::after {
  background: #a9c3e0;
}

.picked .unlit::before {
  background: #243c5a;
}

.side-bottom {
  display: flex;
  align-items: center;
  gap: 3px;
  flex: none;
  height: 17px;
  padding-right: 153px;
}

.orange {
  display: flex;
  align-items: center;
  justify-content: center;
  width: 11px;
  height: 10px;
  background: #ffad56;
  color: #3a2a16;
}

.push {
  margin-left: auto;
}

.zoom-value {
  width: 27px;
  height: 10px;
  background: linear-gradient(90deg, #00717c 32%, #161616 32%);
  line-height: 10px;
}

/* status bar */
.status {
  display: flex;
  align-items: center;
  gap: 8px;
  flex: none;
  height: 28px;
  padding: 0 10px 2px 9px;
}

.warning {
  flex: 1;
  height: 15px;
  margin-left: 5px;
  padding-left: 5px;
  border-radius: 2px;
  background: #e66a42;
  color: #2c1710;
  line-height: 15px;
  text-decoration: none;
}

.foot-btn {
  display: flex;
  align-items: center;
  justify-content: center;
  height: 15px;
  background: #343434;
  border-radius: 2px;
}

.cluster .wide { width: 159px; }
.cluster .name { width: 49px; }
.status .plain { margin-left: 5px; }
</style>
